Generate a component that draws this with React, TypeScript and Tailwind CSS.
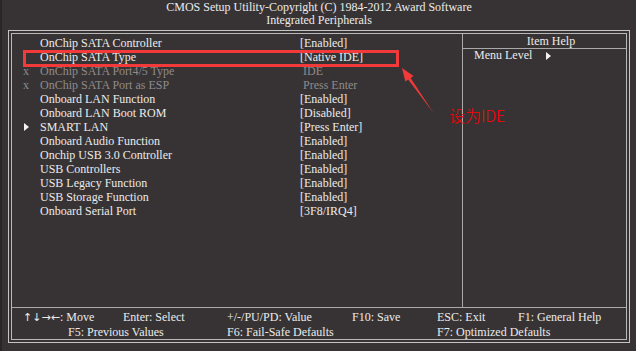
import React from "react";

type Row = {
  marker?: "x" | "arrow";
  label: string;
  value: string;
  disabled?: boolean;
};

const rows: Row[] = [
  { label: "OnChip SATA Controller", value: "[Enabled]" },
  { label: "OnChip SATA Type", value: "[Native IDE]" },
  { marker: "x", label: "OnChip SATA Port4/5 Type", value: "IDE", disabled: true },
  { marker: "x", label: "OnChip SATA Port as ESP", value: "Press Enter", disabled: true },
  { label: "Onboard LAN Function", value: "[Enabled]" },
  { label: "Onboard LAN Boot ROM", value: "[Disabled]" },
  { marker: "arrow", label: "SMART LAN", value: "[Press Enter]" },
  { label: "Onboard Audio Function", value: "[Enabled]" },
  { label: "Onchip USB 3.0 Controller", value: "[Enabled]" },
  { label: "USB Controllers", value: "[Enabled]" },
  { label: "USB Legacy Function", value: "[Enabled]" },
  { label: "USB Storage Function", value: "[Enabled]" },
  { label: "Onboard Serial Port", value: "[3F8/IRQ4]" },
];

function Tri({ className = "" }: { className?: string }) {
  return (
    <svg width="5" height="8" viewBox="0 0 5 8" className={className}>
      <polygon points="0,0 5,4 0,8" fill="#f2f2f2" />
    </svg>
  );
}

function SettingRow({ row }: { row: Row }) {
  const tone = row.disabled ? "text-[#8e8b8b]" : "text-[#ebebeb]";
  return (
    <div className={`flex h-[14px] items-center leading-[14px] ${tone}`}>
      <span className="flex w-[17px] items-center">
        {row.marker === "x" && "x"}
        {row.marker === "arrow" && <Tri className="ml-[1px]" />}
      </span>
      <span className="w-[260px]">{row.label}</span>
      <span className={row.disabled ? "pl-[3px]" : ""}>{row.value}</span>
    </div>
  );
}

export default function App() {
  return (
    <div className="relative h-[351px] w-[636px] overflow-hidden border-l-[2px] border-[#2a2627] bg-[#373334] font-['Liberation_Serif','Times_New_Roman',serif] text-[12px] text-[#ebebeb]">
      {/* Title */}
      <div className="mb-[3px] pt-[1px] text-center leading-[13px]">
        <div>CMOS Setup Utility-Copyright (C) 1984-2012 Award Software</div>
        <div>Integrated Peripherals</div>
      </div>

      {/* Double frame */}
      <div className="ml-[6px] h-[313px] w-[622px] border border-[#c4c4c4] p-[2px]">
        <div className="flex h-full flex-col border border-[#b8b8b8]">
          <div className="flex h-[273px]">
            <div className="w-[451px] border-r border-[#a9a9a9] pl-[11px] pt-[2px]">
              {rows.map((r) => (
                <SettingRow key={r.label} row={r} />
              ))}
            </div>
            <div className="flex-1">
              <div className="h-[15px] border-b border-[#a9a9a9] pl-[13px] text-center leading-[14px]">
                Item Help
              </div>
              <div className="flex items-center pl-[11px] leading-[13px]">
                <span className="w-[72px]">Menu Level</span>
                <Tri />
              </div>
            </div>
          </div>

          {/* Footer keys */}
          <div className="flex-1 border-t border-[#a9a9a9] pt-[2px] leading-[14px]">
            <div className="flex pl-[11px]">
              <span className="w-[100px]">
                <span className="font-['DejaVu_Sans',sans-serif] text-[11px]">↑↓→←</span>: Move
              </span>
              <span className="w-[104px]">Enter: Select</span>
              <span className="w-[125px]">+/-/PU/PD: Value</span>
              <span className="w-[85px]">F10: Save</span>
              <span className="w-[81px]">ESC: Exit</span>
              <span>F1: General Help</span>
            </div>
            <div className="flex pl-[56px]">
              <span className="w-[159px]">F5: Previous Values</span>
              <span className="w-[210px]">F6: Fail-Safe Defaults</span>
              <span>F7: Optimized Defaults</span>
            </div>
          </div>
        </div>
      </div>

      {/* Annotation overlays */}
      <div className="absolute left-[21px] top-[50px] h-[17px] w-[376px] border-[3px] border-[#f23a3a]" />
      <svg
        className="pointer-events-none absolute left-[-2px] top-0"
        width="636"
        height="351"
        viewBox="0 0 636 351"
      >
        <polygon
          points="402,68 413.5,76 410.6,78.1 433.5,113 408.2,79.6 405.3,81.6"
          fill="#f23a3a"
        />
      </svg>
      <div className="absolute left-[447px] top-[105px] font-['Noto_Sans_CJK_SC','Noto_Sans',sans-serif] text-[16px] font-light leading-[20px] text-[#ff0000]">
        设为IDE
      </div>
    </div>
  );
}
